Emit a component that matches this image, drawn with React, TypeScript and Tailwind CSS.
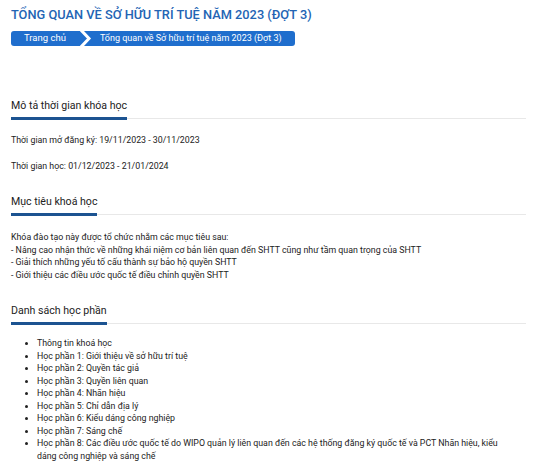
const modules = [
  "Thông tin khoá học",
  "Học phần 1: Giới thiệu về sở hữu trí tuệ",
  "Học phần 2: Quyền tác giả",
  "Học phần 3: Quyền liên quan",
  "Học phần 4: Nhãn hiệu",
  "Học phần 5: Chỉ dẫn địa lý",
  "Học phần 6: Kiểu dáng công nghiệp",
  "Học phần 7: Sáng chế",
  "Học phần 8: Các điều ước quốc tế do WIPO quản lý liên quan đến các hệ thống đăng ký quốc tế và PCT Nhãn hiệu, kiểu dáng công nghiệp và sáng chế",
];

const SectionTitle = ({ children }: { children: string }) => (
  <div className="border-b border-[#e8e8e8]">
    <h2 className="inline-block border-b-[3px] border-[#1c5391] -mb-[2px] pb-[3px] text-[10.6px] leading-[16px] text-[#222]">
      {children}
    </h2>
  </div>
);

export default function App() {
  return (
    <main
      className="bg-white pl-[11px] pr-[8px] pt-[5px] text-[#222]"
      style={{ fontFamily: "Roboto, 'Noto Sans', sans-serif" }}
    >
      <h1 className="text-[12.8px] leading-[20px] font-medium text-[#2364b4]">
        TỔNG QUAN VỀ SỞ HỮU TRÍ TUỆ NĂM 2023 (ĐỢT 3)
      </h1>
      <nav className="mt-[6px] flex h-[15px] w-[284px] items-center rounded-[3px] bg-[#1f6ecd] text-[9px] text-white">
        <span className="pl-[13px] pr-[14px] text-[9.5px]">Trang chủ</span>
        <svg width="12" height="15" viewBox="0 0 12 15" className="shrink-0">
          <polyline points="1,-1 9,7.5 1,16" fill="none" stroke="#fff" strokeWidth="3" />
        </svg>
        <span className="pl-[8px]">Tổng quan về Sở hữu trí tuệ năm 2023 (Đợt 3)</span>
      </nav>

      <section className="mt-[46px]">
        <SectionTitle>Mô tả thời gian khóa học</SectionTitle>
        <div className="mt-[15px] text-[8.8px] leading-[13px]">
          <p>Thời gian mở đăng ký: 19/11/2023 - 30/11/2023</p>
          <p className="mt-[13px]">Thời gian học: 01/12/2023 - 21/01/2024</p>
        </div>
      </section>

      <section className="mt-[15px]">
        <SectionTitle>Mục tiêu khoá học</SectionTitle>
        <div className="mt-[16px] text-[8.8px] leading-[12.5px]">
          <p>Khóa đào tạo này được tổ chức nhằm các mục tiêu sau:</p>
          <p>- Nâng cao nhận thức về những khái niệm cơ bản liên quan đến SHTT cũng như tầm quan trọng của SHTT</p>
          <p>- Giải thích những yếu tố cấu thành sự bảo hộ quyền SHTT</p>
          <p>- Giới thiệu các điều ước quốc tế điều chỉnh quyền SHTT</p>
        </div>
      </section>

      <section className="mt-[16px]">
        <SectionTitle>Danh sách học phần</SectionTitle>
        <ul className="mt-[13px] list-disc pl-[26px] pr-[26px] text-[8.8px] leading-[12.5px]">
          {modules.map((m) => (
            <li key={m}>{m}</li>
          ))}
        </ul>
      </section>
    </main>
  );
}
